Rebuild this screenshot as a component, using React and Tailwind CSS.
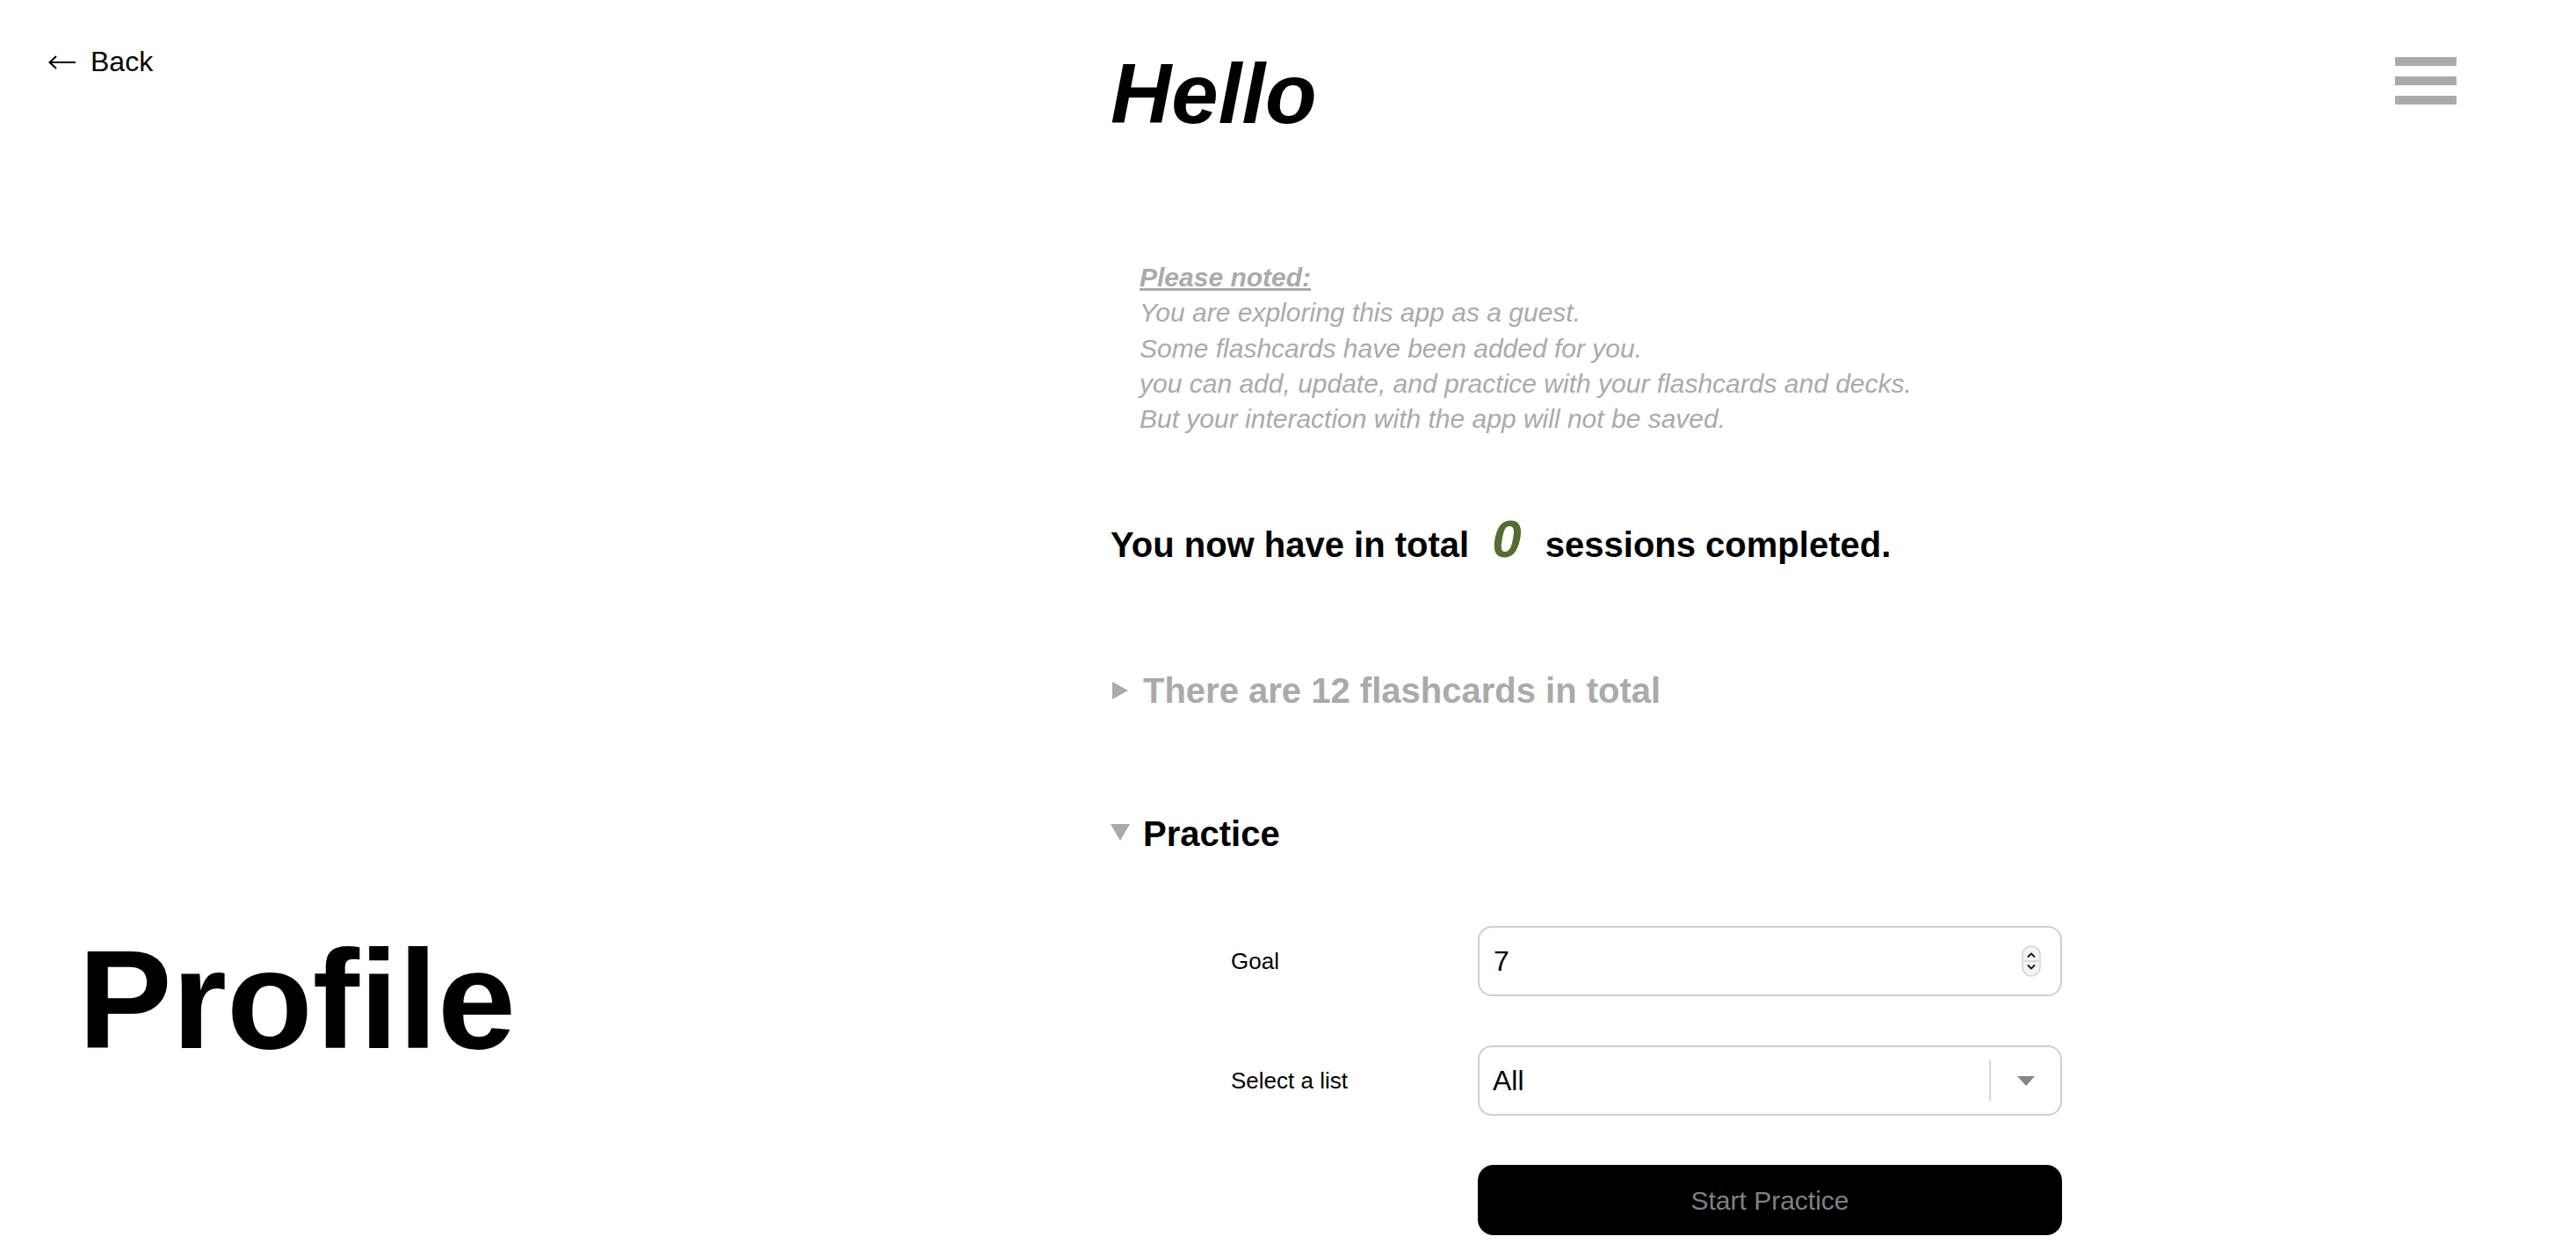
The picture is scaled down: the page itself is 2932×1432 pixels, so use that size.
import React from "react";

function Spinner() {
  return (
    <svg width="22" height="36" viewBox="0 0 22 36" className="pointer-events-none">
      <rect x="1" y="1" width="20" height="34" rx="10" fill="#f4f4f4" stroke="#d2d2d2" strokeWidth="1.5" />
      <line x1="3" y1="18" x2="19" y2="18" stroke="#d2d2d2" strokeWidth="1.5" />
      <path d="M7.5 13 L11 9.5 L14.5 13" stroke="#1a1a1a" strokeWidth="2" fill="none" strokeLinecap="round" strokeLinejoin="round" />
      <path d="M7.5 23 L11 26.5 L14.5 23" stroke="#1a1a1a" strokeWidth="2" fill="none" strokeLinecap="round" strokeLinejoin="round" />
    </svg>
  );
}

export default function App() {
  return (
    <div className="min-h-screen w-full bg-white text-black flex font-['Liberation_Sans',Arial,sans-serif]">
      {/* Left column */}
      <aside className="w-[1264px] shrink-0 flex flex-col">
        <a href="#" className="mt-[54px] ml-[55px] flex items-center text-[32px] leading-[32px] text-black no-underline self-start">
          <svg width="31" height="16" viewBox="0 0 31 16" className="mt-[2px] shrink-0">
            <path d="M1.5 8 H31" stroke="#000" strokeWidth="2" fill="none" />
            <path d="M9 1 L1.5 8 L9 15" stroke="#000" strokeWidth="2" fill="none" />
          </svg>
          <span className="ml-[17px]">Back</span>
        </a>
        <h1 className="mt-[972px] ml-[89px] text-[160px] font-bold leading-none self-start">Profile</h1>
      </aside>

      {/* Main column */}
      <main className="flex-1 flex flex-col">
        <h1 className="mt-[59px] text-[96px] font-bold italic leading-none">Hello</h1>

        <div className="mt-[141px] pl-[33px] text-[30px] leading-[40.3px] italic text-[#aaaaaa]">
          <p className="font-bold underline">Please noted:</p>
          <p>You are exploring this app as a guest.</p>
          <p>Some flashcards have been added for you.</p>
          <p>you can add, update, and practice with your flashcards and decks.</p>
          <p>But your interaction with the app will not be saved.</p>
        </div>

        <p className="mt-[100px] text-[40px] leading-[46px] font-bold">
          You now have in total{" "}
          <span className="ml-[15px] mr-[16px] text-[60px] leading-[0] italic font-bold text-[#556b2f]">0</span>{" "}
          sessions completed.
        </p>

        <div className="mt-[120px] flex items-center h-[46px]">
          <svg width="18" height="20" viewBox="0 0 18 20" className="ml-[2px] shrink-0">
            <path d="M0 0 L18 10 L0 20 Z" fill="#aaaaaa" />
          </svg>
          <span className="ml-[17px] text-[40px] leading-[46px] font-bold text-[#aaaaaa]">
            There are 12 flashcards in total
          </span>
        </div>

        <div className="mt-[117px] flex items-center h-[46px]">
          <svg width="22" height="19" viewBox="0 0 22 19" className="shrink-0 -mt-[4px]">
            <path d="M0 0 L22 0 L11 19 Z" fill="#aaaaaa" />
          </svg>
          <span className="ml-[15px] text-[40px] leading-[46px] font-bold text-black">Practice</span>
        </div>

        <div className="mt-[82px] ml-[137px] grid grid-cols-[281px_665px] gap-y-[56px] items-center">
          <label className="text-[26px] leading-none text-black">Goal</label>
          <div className="relative h-[80px]">
            <input
              type="number"
              defaultValue={7}
              className="w-full h-full rounded-[16px] border-2 border-[#cfcfcf] bg-white pl-[16px] pr-[50px] text-[32px] text-black outline-none [appearance:textfield] [&::-webkit-inner-spin-button]:appearance-none [&::-webkit-outer-spin-button]:appearance-none font-['Liberation_Sans',Arial,sans-serif]"
            />
            <div className="absolute right-[24px] top-1/2 -translate-y-1/2 flex">
              <Spinner />
            </div>
          </div>

          <label className="text-[26px] leading-none text-black">Select a list</label>
          <div className="h-[80px] rounded-[16px] border-2 border-[#cfcfcf] bg-white flex items-center">
            <span className="flex-1 pl-[15px] text-[32px] text-black">All</span>
            <div className="w-[2px] h-[46px] bg-[#d6d6d6]"></div>
            <div className="w-[79px] flex items-center justify-center">
              <svg width="20" height="11" viewBox="0 0 20 11">
                <path d="M0 0 L20 0 L10 11 Z" fill="#858585" />
              </svg>
            </div>
          </div>

          <div></div>
          <button className="h-[80px] rounded-[18px] bg-black text-[30px] text-[#808080] font-['Liberation_Sans',Arial,sans-serif]">
            Start Practice
          </button>
        </div>
      </main>

      {/* Menu */}
      <div className="pr-[136px] pt-[65px] shrink-0">
        <button className="flex flex-col gap-[12px]" aria-label="menu">
          <span className="block w-[70px] h-[10px] bg-[#aaaaaa]"></span>
          <span className="block w-[70px] h-[10px] bg-[#aaaaaa]"></span>
          <span className="block w-[70px] h-[10px] bg-[#aaaaaa]"></span>
        </button>
      </div>
    </div>
  );
}
